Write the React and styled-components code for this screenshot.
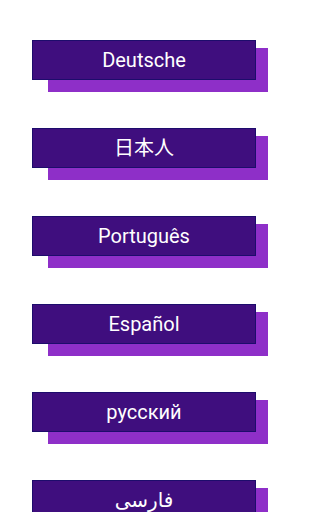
import React from 'react';
import styled, { createGlobalStyle } from 'styled-components';

const GlobalStyle = createGlobalStyle`
  html, body {
    margin: 0;
    padding: 0;
    background: #fff;
    overflow: hidden;
  }
  body {
    font-family: Roboto, "Noto Sans", "Noto Sans CJK JP", sans-serif;
  }
`;

const Page = styled.main`
  width: 288px;
  height: 512px;
  padding: 40px 0 0 32px;
  box-sizing: border-box;
  display: flex;
  flex-direction: column;
  gap: 48px;
`;

const Item = styled.div`
  position: relative;
  isolation: isolate;
  width: 224px;
  height: 40px;
  flex-shrink: 0;

  /* offset purple block behind the button */
  &::before {
    content: '';
    position: absolute;
    z-index: -1;
    left: 16px;
    top: 8px;
    width: 220px;
    height: 44px;
    background: #8e2fc8;
  }
`;

const LangButton = styled.button`
  display: block;
  width: 100%;
  height: 100%;
  padding: 1px 0 0;
  box-sizing: border-box;
  background: #3f0e7e;
  border: 1px solid #1d0c6c;
  color: #fff;
  font-family: Roboto, "Noto Sans", "Noto Sans CJK JP", "DejaVu Sans", sans-serif;
  font-size: 20px;
  line-height: 37px;
  text-align: center;
  cursor: pointer;
`;

const languages = ['Deutsche', '日本人', 'Português', 'Español', 'русский', 'فارسی'];

export default function App() {
  return (
    <>
      <GlobalStyle />
      <Page>
        {languages.map((lang) => (
          <Item key={lang}>
            <LangButton type="button">{lang}</LangButton>
          </Item>
        ))}
      </Page>
    </>
  );
}
